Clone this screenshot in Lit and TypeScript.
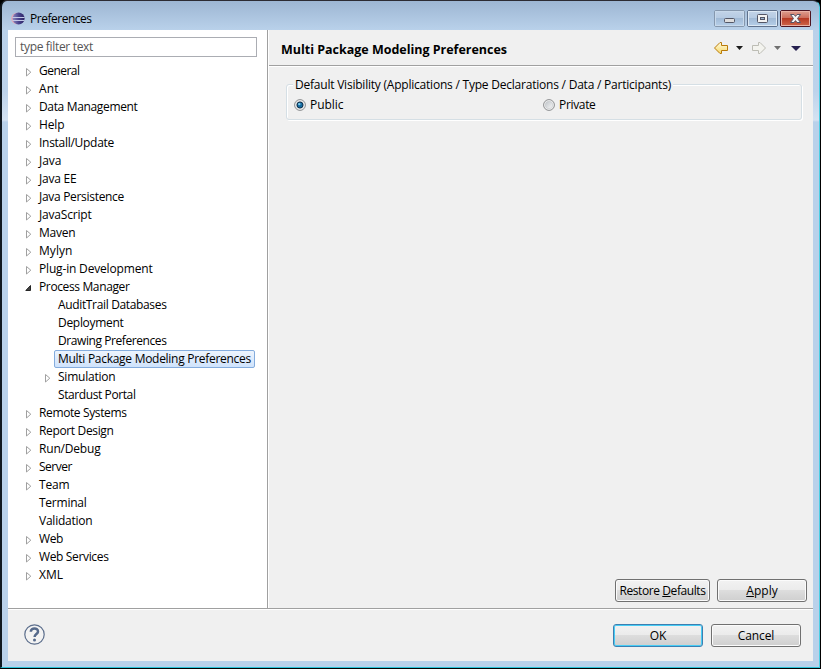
import { LitElement, html, css, svg } from "lit";
import { customElement, property } from "lit/decorators.js";
import { classMap } from "lit/directives/class-map.js";

type Item = { label: string; width: number; state?: "closed" | "open" | "leaf"; level?: number; selected?: boolean };

const ITEMS: Item[] = [
  { label: "General", width: 40.5 }, { label: "Ant", width: 19.5 }, { label: "Data Management", width: 98.5 },
  { label: "Help", width: 25.5 }, { label: "Install/Update", width: 75 }, { label: "Java", width: 22.5 },
  { label: "Java EE", width: 37.5 }, { label: "Java Persistence", width: 85 }, { label: "JavaScript", width: 52.5 },
  { label: "Maven", width: 36.5 }, { label: "Mylyn", width: 33.5 }, { label: "Plug-in Development", width: 113.5 },
  { label: "Process Manager", width: 90.5, state: "open" },
  { label: "AuditTrail Databases", width: 108.5, state: "leaf", level: 1 },
  { label: "Deployment", width: 65.5, state: "leaf", level: 1 },
  { label: "Drawing Preferences", width: 108.5, state: "leaf", level: 1 },
  { label: "Multi Package Modeling Preferences", width: 193, state: "leaf", level: 1, selected: true },
  { label: "Simulation", width: 57.5, level: 1 },
  { label: "Stardust Portal", width: 77.5, state: "leaf", level: 1 },
  { label: "Remote Systems", width: 87.5 }, { label: "Report Design", width: 74.5 }, { label: "Run/Debug", width: 61.5 },
  { label: "Server", width: 33 }, { label: "Team", width: 30.5 },
  { label: "Terminal", width: 47.5, state: "leaf" }, { label: "Validation", width: 53.5, state: "leaf" },
  { label: "Web", width: 24 }, { label: "Web Services", width: 69.5 }, { label: "XML", width: 24 },
];

/* Text whose letter spacing is adjusted so that it fills the given width. */
@customElement("fit-text")
class FitText extends LitElement {
  @property({ type: Number }) width = 0;

  static styles = css`
    :host { display: inline-block; white-space: pre; letter-spacing: 0; }
  `;

  firstUpdated() {
    const count = (this.textContent ?? "").length;
    const natural = this.getBoundingClientRect().width;
    if (count && this.width) this.style.letterSpacing = `${((this.width - natural) / count).toFixed(3)}px`;
  }

  render() {
    return html`<slot></slot>`;
  }
}

@customElement("tree-row")
class TreeRow extends LitElement {
  @property({ attribute: false }) item: Item = { label: "", width: 0 };

  static styles = css`
    :host { display: block; height: 18px; }
    .row { display: flex; height: 18px; padding-left: 17px; align-items: center; }
    .nested { padding-left: 36px; }
    svg { width: 10px; height: 18px; flex: none; }
    .label { height: 18px; line-height: 16px; padding: 0 3px; border: 1px solid transparent; border-radius: 2px; white-space: pre; box-sizing: border-box; }
    .selected { border-color: #84acdd; background: linear-gradient(#edf4fd, #cfe3fc); }
  `;

  render() {
    const { label, width, state = "closed", level = 0, selected = false } = this.item;
    return html`<div class=${classMap({ row: true, nested: level > 0 })}>
      <svg viewBox="0 0 10 18">
        ${state === "closed" ? svg`<path d="M1.5 6.5V14L5.8 10.2Z" fill="#fff" stroke="#a0a0a0"/>` : ""}
        ${state === "open" ? svg`<path d="M5.5 7.5V12.5H0.8Z" fill="#444" stroke="#262626"/>` : ""}
      </svg>
      <span class=${classMap({ label: true, selected })}><fit-text .width=${width}>${label}</fit-text></span>
    </div>`;
  }
}

@customElement("push-button")
class PushButton extends LitElement {
  @property({ type: Boolean, reflect: true }) primary = false;

  static styles = css`
    :host { display: block; box-sizing: border-box; width: 90px; height: 23px; border: 1px solid #707070; border-radius: 3px;
      background: linear-gradient(#f2f2f2, #ebebeb 48%, #dddddd 50%, #cfcfcf); box-shadow: inset 0 0 0 1px #fbfbfb;
      line-height: 22px; text-align: center; white-space: nowrap; }
    :host([primary]) { border-color: #3c7fb1; box-shadow: inset 0 0 0 1px #48cdf5; }
  `;

  render() {
    return html`<slot></slot>`;
  }
}

@customElement("app-root")
class AppRoot extends LitElement {
  static styles = css`
    :host { display: block; width: 821px; height: 669px; overflow: hidden; background: #000;
      font: 12px/18px "Open Sans", "Noto Sans", sans-serif; color: #000; }
    * { box-sizing: border-box; }
    .window { display: flex; flex-direction: column; width: 820px; height: 668px; padding: 0 6px 6px; border: 1px solid #35c5dc;
      border-width: 1px 1px 1px 2px; border-color: #2c2b33 #4ccfe4 #2bc3d8 #101820; border-radius: 7px 7px 0 0;
      background: linear-gradient(#9db6d3, #b9d1ea 29px, #bdd3eb 90px, #d4e2f2 119px, #b9d1ea 121px, #b9d1ea); }
    .title { display: flex; height: 29px; padding: 9px 2px 0 3px; flex: none; }
    .title .logo { width: 14px; height: 14px; margin-top: 1px; }
    .title .name { margin-left: 5px; flex: 1; }
    .controls { display: flex; gap: 2px; }
    .controls svg { display: block; width: 31px; height: 17px; }
    .client { display: flex; flex-direction: column; height: 631px; background: #f0f0f0; }
    .main { display: flex; height: 578px; }
    .side { width: 260px; flex: none; padding: 7px 0 0; background: #fff; border-right: 1px solid #a0a0a0; }
    .filter { width: 242px; height: 20px; margin-left: 7px; padding-left: 4px; border: 1px solid #abadb3; line-height: 18px; color: #555; }
    .tree { margin-top: 5px; }
    .page { display: flex; flex-direction: column; flex: 1; border-left: 1px solid #fff; }
    .head { display: flex; height: 37px; padding-left: 12px; border-bottom: 1px solid #fff; box-shadow: inset 0 -1px #a0a0a0; }
    .head h1 { margin: 0; flex: 1; font-size: 12.5px; font-weight: 700; line-height: 39px; }
    .head svg { width: 100px; height: 36px; }
    fieldset { display: flex; position: relative; width: 516px; height: 36px; margin: 17px 0 0 17px; padding: 11px 0 0 7px;
      border: 1px solid #d5dfe5; border-radius: 3px; box-shadow: 1px 1px #fff, inset 1px 1px #fff; }
    .legend { position: absolute; left: 6px; top: -9px; padding: 0 2px; background: #f0f0f0; white-space: nowrap; }
    .radio { display: flex; width: 249px; height: 18px; gap: 4px; }
    .radio svg { width: 12px; height: 12px; margin-top: 3px; }
    .actions { display: flex; justify-content: flex-end; gap: 7px; margin-top: auto; padding: 0 6px 6px 0; }
    .wide { width: 95px; }
    .footer { display: flex; height: 53px; padding: 15px 12px 0 16px; gap: 8px; border-top: 1px solid #a0a0a0; box-shadow: inset 0 1px #fff; }
    .help { width: 21px; height: 21px; margin-right: auto; }
    u { text-decoration-thickness: 1px; text-underline-offset: 1px; }
  `;

  private radio(label: string, width: number, on: boolean) {
    return html`<label class="radio"><svg viewBox="0 0 12 12">
      <defs><linearGradient id="r" x2="1" y2="1"><stop stop-color="#bfc4c9"/><stop offset="1" stop-color="#f7f7f7"/></linearGradient></defs>
      <circle cx="6" cy="6" r="5.4" fill="#f5f5f5" stroke="#8a8c8e"/>
      <circle cx="6" cy="6" r="3.8" fill="url(#r)" stroke="#c2c6ca" stroke-width=".6"/>
      ${on ? svg`<circle cx="6" cy="6" r="3" fill="#156ba0" stroke="#10334f"/><circle cx="5.3" cy="5.1" r="1.2" fill="#7fd0f2"/>` : ""}
    </svg><fit-text width=${width}>${label}</fit-text></label>`;
  }

  render() {
    return html`<div class="window">
      <div class="title">
        <svg class="logo" viewBox="0 0 14 14">
          <defs><linearGradient id="e" x2="1"><stop stop-color="#8a86bd"/><stop offset=".5" stop-color="#49448f"/><stop offset="1" stop-color="#2c2263"/></linearGradient></defs>
          <circle cx="6" cy="7.500" r="5.800" fill="#e3a5b5"/><circle cx="7.600" cy="7.500" r="6" fill="url(#e)"/>
          <path d="M1.500 6.500H13.500M1.500 9.500H13.500" stroke="#c3c9e8"/>
        </svg>
        <span class="name"><fit-text width="61.5">Preferences</fit-text></span>
        <div class="controls">
          <svg viewBox="0 0 31 17">
            <defs><linearGradient id="g" y2="1" x2="0"><stop stop-color="#c3d4e8"/><stop offset=".48" stop-color="#b5cae2"/><stop offset=".5" stop-color="#a1bad6"/><stop offset="1" stop-color="#b7d0ea"/></linearGradient></defs>
            <rect x=".5" y=".5" width="30" height="16" rx="1.5" fill="url(#g)" stroke="#8597ad"/><rect x="1.5" y="1.5" width="28" height="14" fill="none" stroke="#c8d9eb"/>
            <rect x="10.500" y="8.500" width="10" height="4" rx="1" fill="#ddd" stroke="#535666"/>
          </svg>
          <svg viewBox="0 0 31 17">
            <rect x=".5" y=".5" width="30" height="16" rx="1.5" fill="url(#g)" stroke="#5f718c"/><rect x="1.5" y="1.5" width="28" height="14" fill="none" stroke="#dce8f4"/>
            <rect x="10.500" y="4.500" width="10" height="8" rx="1" fill="#f2f2f2" stroke="#535666"/><rect x="13.500" y="7.500" width="4" height="2" fill="#9db5d0" stroke="#535666"/>
          </svg>
          <svg viewBox="0 0 31 17">
            <defs><linearGradient id="c" y2="1" x2="0"><stop stop-color="#dfa294"/><stop offset=".46" stop-color="#cd6e5c"/><stop offset=".5" stop-color="#b73a24"/><stop offset="1" stop-color="#d0694d"/></linearGradient></defs>
            <rect x=".5" y=".5" width="30" height="16" rx="1.5" fill="url(#c)" stroke="#4d1420"/><rect x="1.5" y="1.5" width="28" height="14" fill="none" stroke="#e9b1a5"/>
            <path d="M10.500 4.500H14L15.500 6.400L17 4.500H20.500L17.500 8.500L20.500 12.500H17L15.500 10.600L14 12.500H10.500L13.500 8.500Z" fill="#f5f5f5" stroke="#565466"/>
          </svg>
        </div>
      </div>
      <div class="client">
        <div class="main">
          <div class="side">
            <div class="filter"><fit-text width="73">type filter text</fit-text></div>
            <div class="tree">${ITEMS.map((item) => html`<tree-row .item=${item}></tree-row>`)}</div>
          </div>
          <div class="page">
            <div class="head">
              <h1><fit-text width="226">Multi Package Modeling Preferences</fit-text></h1>
              <svg viewBox="0 0 100 36">
                <defs><linearGradient id="y" x2="0" y2="1"><stop stop-color="#fffbe0"/><stop offset="1" stop-color="#f7d868"/></linearGradient></defs>
                <path d="M1.500 18L7 12.500H8.500V15.500H14.500V20.500H8.500V23.500H7Z" fill="url(#y)" stroke="#b97a08"/>
                <path d="M23 16H30L26.500 20Z" fill="#1c1c1c"/>
                <path d="M52.500 18L47 12.500H45.500V15.500H39.500V20.500H45.500V23.500H47Z" fill="#f3f3ee" stroke="#bcbcb4"/>
                <path d="M61 16H68L64.500 20Z" fill="#707070"/>
                <path d="M78 16H88L83 21Z" fill="#272150"/>
              </svg>
            </div>
            <fieldset>
              <span class="legend"><fit-text width="376">Default Visibility (Applications / Type Declarations / Data / Participants)</fit-text></span>
              ${this.radio("Public", 33.5, true)}${this.radio("Private", 36.5, false)}
            </fieldset>
            <div class="actions">
              <push-button class="wide"><fit-text width="86">Restore <u>D</u>efaults</fit-text></push-button>
              <push-button><fit-text width="31.5"><u>A</u>pply</fit-text></push-button>
            </div>
          </div>
        </div>
        <div class="footer">
          <svg class="help" viewBox="0 0 21 21">
            <circle cx="10.500" cy="10.500" r="9.700" fill="#f3f3f3" stroke="#5c6e8c" stroke-width="1.200"/>
            <path d="M6.800 7.800C6.800 3.300 14.200 3.500 14 7.600C13.900 10 10.600 10.200 10.600 13" fill="none" stroke="#566a8b" stroke-width="2.500"/>
            <circle cx="10.500" cy="15.900" r="1.500" fill="#566a8b"/>
          </svg>
          <push-button primary><fit-text width="16.5">OK</fit-text></push-button>
          <push-button><fit-text width="36.5">Cancel</fit-text></push-button>
        </div>
      </div>
    </div>`;
  }
}
